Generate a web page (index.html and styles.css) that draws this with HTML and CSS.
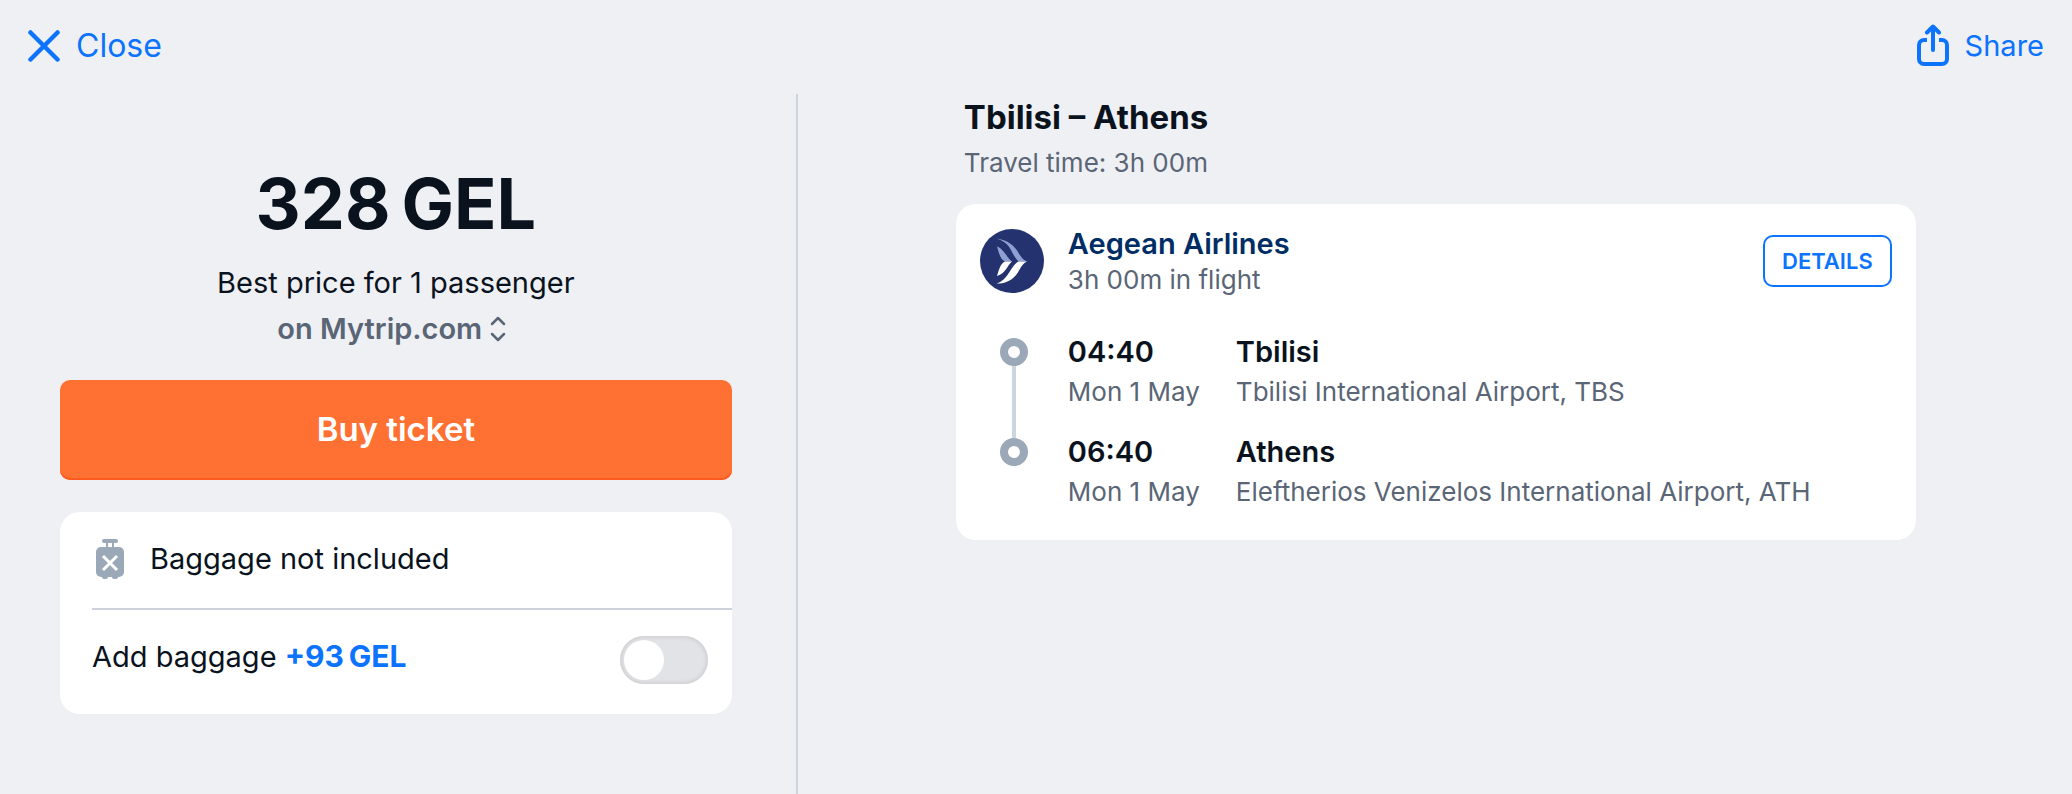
FILE: index.html
```html
<!DOCTYPE html>
<html lang="en">
<head>
    <meta charset="UTF-8">
    <meta name="viewport" content="width=device-width, initial-scale=1.0">
    <title>Tbilisi – Athens</title>
    <link rel="stylesheet" href="styles.css">
</head>
<body>
    <header class="topbar">
        <button class="topbar-btn close" type="button">
            <svg width="32" height="32" viewBox="0 0 32 32" fill="none" stroke="currentColor" stroke-width="4.500" stroke-linecap="round">
                <path d="M2.500 2.500l27 27M29.500 2.500l-27 27"/>
            </svg>
            Close
        </button>
        <button class="topbar-btn share" type="button">
            <svg width="32" height="44" viewBox="0 0 32 44" fill="none" stroke="currentColor" stroke-width="4">
                <path d="M10 16H7a5 5 0 0 0-5 5v14a5 5 0 0 0 5 5h18a5 5 0 0 0 5-5V21a5 5 0 0 0-5-5h-3"/>
                <path d="M16 26V3M10 8.500l6-6 6 6" stroke-linecap="round" stroke-linejoin="round"/>
            </svg>
            Share
        </button>
    </header>
    <main class="ticket">
        <section class="offer">
            <div class="price">328&#8201;GEL</div>
            <p class="price-note">Best price for 1 passenger</p>
            <div class="agent">
                <select class="agent-select" aria-label="Ticket seller">
                    <option>on Mytrip.com</option>
                </select>
                <svg class="agent-arrows" width="16" height="26" viewBox="0 0 16 26" fill="none" stroke="currentColor" stroke-width="2.500" stroke-linecap="round" stroke-linejoin="round">
                    <path d="M2 8l6-6 6 6M2 18l6 6 6-6"/>
                </svg>
            </div>
            <button class="buy" type="button">Buy ticket</button>
            <div class="baggage card">
                <div class="baggage-status">
                    <svg width="28" height="40" viewBox="0 0 28 40">
                        <g fill="#9ba8b7">
                            <rect x="6" width="16" height="4" rx="2"/>
                            <path d="M10 3h2v6h-2zM16 3h2v6h-2z"/>
                            <rect y="8" width="28" height="30" rx="5"/>
                            <rect x="6" y="34" width="6" height="6" rx="2"/>
                            <rect x="16" y="34" width="6" height="6" rx="2"/>
                        </g>
                        <path d="M7 17l14 14M21 17L7 31" stroke="#fff" stroke-width="3"/>
                    </svg>
                    Baggage not included
                </div>
                <div class="baggage-add">
                    <label for="addBaggage">Add baggage <b>+93&#8201;GEL</b></label>
                    <input class="toggle" type="checkbox" role="switch" id="addBaggage">
                </div>
            </div>
        </section>
        <section class="route">
            <div class="route-inner">
                <div class="route-head">
                    <h1>Tbilisi – Athens</h1>
                    <p>Travel time: 3h 00m</p>
                </div>
                <article class="flight card">
                    <div class="carrier">
                        <svg width="64" height="64" viewBox="0 0 64 64">
                            <circle cx="32" cy="32" r="32" fill="#24336f"/>
                            <g fill="#8fa1d3">
                                <path d="M16.500 9.500C27 11 34 16 38 23c3 5 5 8 9 9.500h-8.500C35 29 33 25 31 21 28 15 24 12 16.500 9.500z"/>
                                <path d="M17 17.500C24 20 27 29 32 32.500h-7C20 30 19 24 17 17.500z"/>
                            </g>
                            <g fill="#fff">
                                <path d="M38.500 32.500H47c-4 2-5 4-8 9-5 9-12 13-22.500 13C29 51 30 37 38.500 32.500z"/>
                                <path d="M25 32.500h7c-5 4-6 12-15 14.500C19 41 20 35 25 32.500z"/>
                            </g>
                        </svg>
                        <div class="carrier-text">
                            <h2>Aegean Airlines</h2>
                            <p>3h 00m in flight</p>
                        </div>
                        <button class="details" type="button">DETAILS</button>
                    </div>
                    <ol class="stops">
                        <li class="stop">
                            <span class="dot"></span>
                            <div>
                                <strong>04:40</strong>
                                <p>Mon 1 May</p>
                            </div>
                            <div>
                                <strong>Tbilisi</strong>
                                <p>Tbilisi International Airport, TBS</p>
                            </div>
                        </li>
                        <li class="stop">
                            <span class="dot"></span>
                            <div>
                                <strong>06:40</strong>
                                <p>Mon 1 May</p>
                            </div>
                            <div>
                                <strong>Athens</strong>
                                <p>Eleftherios Venizelos International Airport, ATH</p>
                            </div>
                        </li>
                    </ol>
                </article>
            </div>
        </section>
    </main>
</body>
</html>
```
FILE: styles.css
```css
* {
    box-sizing: border-box;
}
body {
    margin: 0;
    min-height: 100vh;
    display: flex;
    flex-direction: column;
    background-color: #eff0f4;
    color: #0a131d;
    font-family: Inter, "Liberation Sans", sans-serif;
    font-size: 29px;
    line-height: 40px;
}
h1, h2, p, ol {
    margin: 0;
    padding: 0;
}
button, select {
    font: inherit;
    border: none;
    background: none;
    padding: 0;
    cursor: pointer;
}
.card {
    background-color: white;
    border-radius: 20px;
}
.topbar {
    display: flex;
    justify-content: space-between;
    align-items: center;
    height: 94px;
    padding: 0 28px 2px;
}
.topbar-btn {
    display: flex;
    align-items: center;
    gap: 16px;
    color: #0c73fe;
}
.close {
    font-size: 32px;
}
.ticket {
    flex: 1;
    display: flex;
}
.offer {
    width: 38.5%;
    padding: 70px 64px 40px 60px;
    border-right: 2px solid #cdd5df;
    text-align: center;
}
.price {
    font-size: 70px;
    line-height: 80px;
    font-weight: 700;
    margin-bottom: 16px;
}
.price-note {
    line-height: 46px;
}
.agent {
    position: relative;
    display: inline-block;
    padding-right: 8px;
    color: #5a6576;
}
.agent-select {
    appearance: none;
    display: block;
    height: 46px;
    padding-right: 24px;
    color: inherit;
    font-weight: 600;
}
.agent-arrows {
    position: absolute;
    right: 8px;
    top: 10px;
    pointer-events: none;
}
.buy {
    display: block;
    width: 100%;
    height: 100px;
    margin: 28px 0 32px;
    padding-bottom: 2px;
    border-radius: 10px;
    background-color: #ff7033;
    box-shadow: inset 0 -2px #ff5a1f;
    color: white;
    font-size: 33px;
    font-weight: 600;
}
.baggage {
    padding-left: 32px;
    text-align: left;
}
.baggage-status {
    display: flex;
    align-items: center;
    gap: 26px;
    height: 98px;
    padding: 0 0 2px 4px;
    border-bottom: 2px solid #cdd2df;
}
.baggage-add {
    display: flex;
    align-items: center;
    justify-content: space-between;
    height: 104px;
    padding: 0 24px 4px 0;
}
.baggage-add label {
    padding-bottom: 8px;
}
.baggage-add b {
    color: #0c73fe;
    font-size: 30px;
}
.toggle {
    appearance: none;
    display: flex;
    width: 88px;
    height: 48px;
    margin: 0;
    padding: 4px;
    border-radius: 24px;
    background-color: #e2e3e7;
    box-shadow: inset 0 0 4px 1px #c9cace;
    cursor: pointer;
}
.toggle::before {
    content: "";
    width: 40px;
    height: 40px;
    border-radius: 50%;
    background-color: white;
}
.toggle:checked {
    justify-content: flex-end;
    background-color: #0c73fe;
}
.route {
    flex: 1;
    padding: 0 40px 0 42px;
}
.route-inner {
    max-width: 960px;
    margin: 0 auto;
}
.route-head {
    padding: 0 8px 18px;
}
.route-head h1 {
    font-size: 33px;
    line-height: 46px;
    font-weight: 700;
}
.route p {
    color: #5a6576;
    font-size: 26px;
}
.route-head p {
    line-height: 46px;
}
.route .flight {
    padding: 20px 24px 28px;
}
.carrier {
    display: flex;
    align-items: center;
    gap: 24px;
    margin-bottom: 34px;
}
.carrier-text {
    flex: 1;
    padding-top: 2px;
}
.carrier-text h2 {
    color: #002d64;
    font-size: 29px;
    line-height: 36px;
    font-weight: 600;
}
.carrier-text p {
    line-height: 36px;
}
.details {
    width: 129px;
    height: 52px;
    border: 2px solid #0c73fe;
    border-radius: 10px;
    color: #0c73fe;
    font-size: 22px;
    font-weight: 600;
}
.stops {
    list-style: none;
    display: grid;
    gap: 20px;
}
.stop {
    position: relative;
    display: grid;
    grid-template-columns: 64px 144px 1fr;
    column-gap: 24px;
}
.stop strong {
    display: block;
    font-weight: 600;
}
.dot {
    width: 28px;
    height: 28px;
    margin: 6px 0 0 20px;
    border: 8px solid #9ba8b7;
    border-radius: 50%;
}
/* line down to the next stop */
.stop:not(:last-child)::after {
    content: "";
    position: absolute;
    left: 32px;
    top: 34px;
    width: 4px;
    height: 72px;
    background-color: #cdd5df;
}
```
